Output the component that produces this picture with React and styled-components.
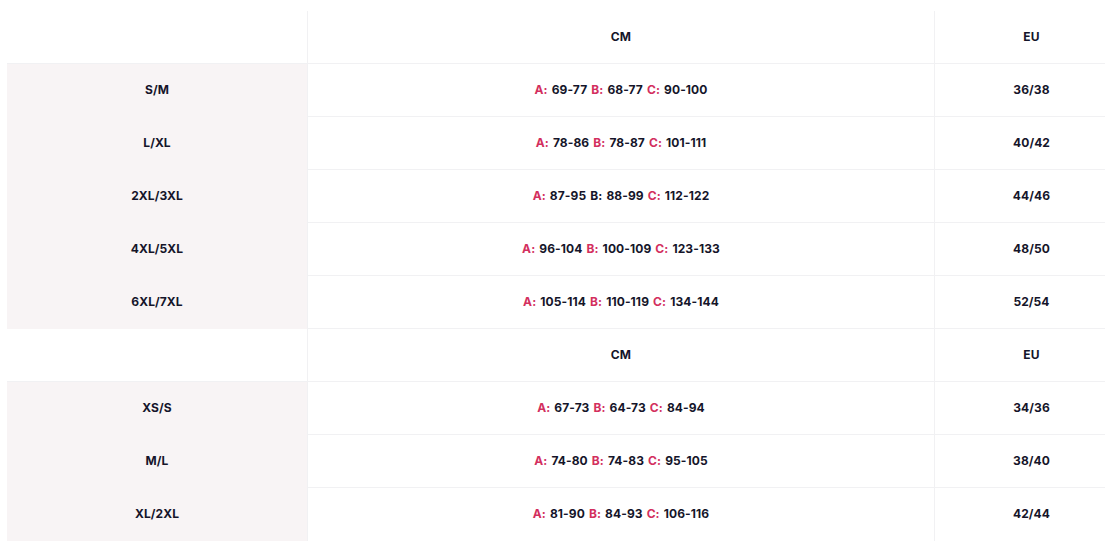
import React from 'react';
import styled, { createGlobalStyle } from 'styled-components';

const Global = createGlobalStyle`
  body {
    margin: 0;
    background: #fff;
    font-family: Inter, "Liberation Sans", sans-serif;
  }
`;

const Page = styled.div`
  width: 1105px;
  height: 551px;
  overflow: hidden;
  padding: 11px 0 0 7px;
  box-sizing: border-box;
`;

const Row = styled.div`
  display: grid;
  grid-template-columns: 300px 627px 194px;
  height: 53px;
`;

const Cell = styled.div`
  display: flex;
  align-items: center;
  justify-content: center;
  padding-bottom: 2px;
  font-size: 12px;
  font-weight: 700;
  color: #15152a;
  letter-spacing: 0.1px;
  border-bottom: ${p => (p.$last ? 'none' : '1px solid #f1f1f3')};
  border-left: ${p => (p.$divider ? '1px solid #f1f1f3' : 'none')};
  box-sizing: border-box;
`;

const SizeCell = styled(Cell)`
  background: ${p => (p.$head ? '#fff' : '#f8f4f5')};
  border-bottom: ${p => (p.$head ? '1px solid #f1f1f3' : 'none')};
`;

const Label = styled.span`
  color: ${p => (p.$plain ? '#15152a' : '#d32f5e')};
  margin-right: 4px;
`;

const Value = styled.span`
  margin-right: 4px;
  &:last-child { margin-right: 0; }
`;

const tables = [
  [
    ['S/M', '69-77', '68-77', '90-100', '36/38'],
    ['L/XL', '78-86', '78-87', '101-111', '40/42'],
    ['2XL/3XL', '87-95', '88-99', '112-122', '44/46', true],
    ['4XL/5XL', '96-104', '100-109', '123-133', '48/50'],
    ['6XL/7XL', '105-114', '110-119', '134-144', '52/54'],
  ],
  [
    ['XS/S', '67-73', '64-73', '84-94', '34/36'],
    ['M/L', '74-80', '74-83', '95-105', '38/40'],
    ['XL/2XL', '81-90', '84-93', '106-116', '42/44'],
  ],
];

const Measures = ({ a, b, c, plainB }) => (
  <>
    <Label>A:</Label><Value>{a}</Value>
    <Label $plain={plainB}>B:</Label><Value>{b}</Value>
    <Label>C:</Label><Value>{c}</Value>
  </>
);

export default function App() {
  return (
    <Page>
      <Global />
      {tables.map((rows, t) => (
        <React.Fragment key={t}>
          <Row>
            <SizeCell $head />
            <Cell $divider>CM</Cell>
            <Cell $divider>EU</Cell>
          </Row>
          {rows.map((r, i) => {
            const last = t === tables.length - 1 && i === rows.length - 1;
            return (
              <Row key={r[0]}>
                <SizeCell>{r[0]}</SizeCell>
                <Cell $divider $last={last}>
                  <Measures a={r[1]} b={r[2]} c={r[3]} plainB={r[5]} />
                </Cell>
                <Cell $divider $last={last}>{r[4]}</Cell>
              </Row>
            );
          })}
        </React.Fragment>
      ))}
    </Page>
  );
}
